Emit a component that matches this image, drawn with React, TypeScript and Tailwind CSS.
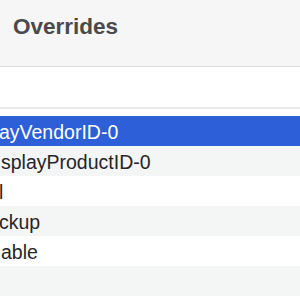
import React from "react";

const rows: { text: string; offset: string; bg: string; color: string }[] = [
  { text: "ayVendorID-0", offset: "ml-[-1px]", bg: "bg-[#2c5fd8]", color: "text-white" },
  { text: "splayProductID-0", offset: "ml-[1px]", bg: "bg-[#f4f5f5]", color: "text-[#262626]" },
  { text: "l", offset: "ml-[-1px]", bg: "bg-white", color: "text-[#262626]" },
  { text: "ckup", offset: "ml-[-1px]", bg: "bg-[#f4f5f5]", color: "text-[#262626]" },
  { text: "able", offset: "ml-[1px]", bg: "bg-white", color: "text-[#262626]" },
  { text: "", offset: "", bg: "bg-[#f4f5f5]", color: "text-[#262626]" },
  { text: "", offset: "", bg: "bg-white", color: "text-[#262626]" },
];

export default function App() {
  return (
    <div
      className="w-[300px] h-[300px] overflow-hidden bg-white flex flex-col"
      style={{ fontFamily: '"Liberation Sans", Arial, sans-serif' }}
    >
      <div className="h-[67px] shrink-0 bg-[#f6f6f6] border-b border-[#dcdcdc] pl-[13px] pt-[15px]">
        <div className="text-[22.5px] leading-[23px] font-bold text-[#4a4a4a]">Overrides</div>
      </div>
      <div className="h-[40px] shrink-0 bg-white" />
      <div className="h-[2px] shrink-0 bg-[#ebebeb]" />
      <div className="h-[7px] shrink-0 bg-white" />
      {rows.map((r, i) => (
        <div key={i} className={`h-[30px] shrink-0 overflow-hidden whitespace-nowrap ${r.bg}`}>
          <div className={`text-[19.5px] leading-[32px] ${r.color} ${r.offset}`}>{r.text}</div>
        </div>
      ))}
    </div>
  );
}
